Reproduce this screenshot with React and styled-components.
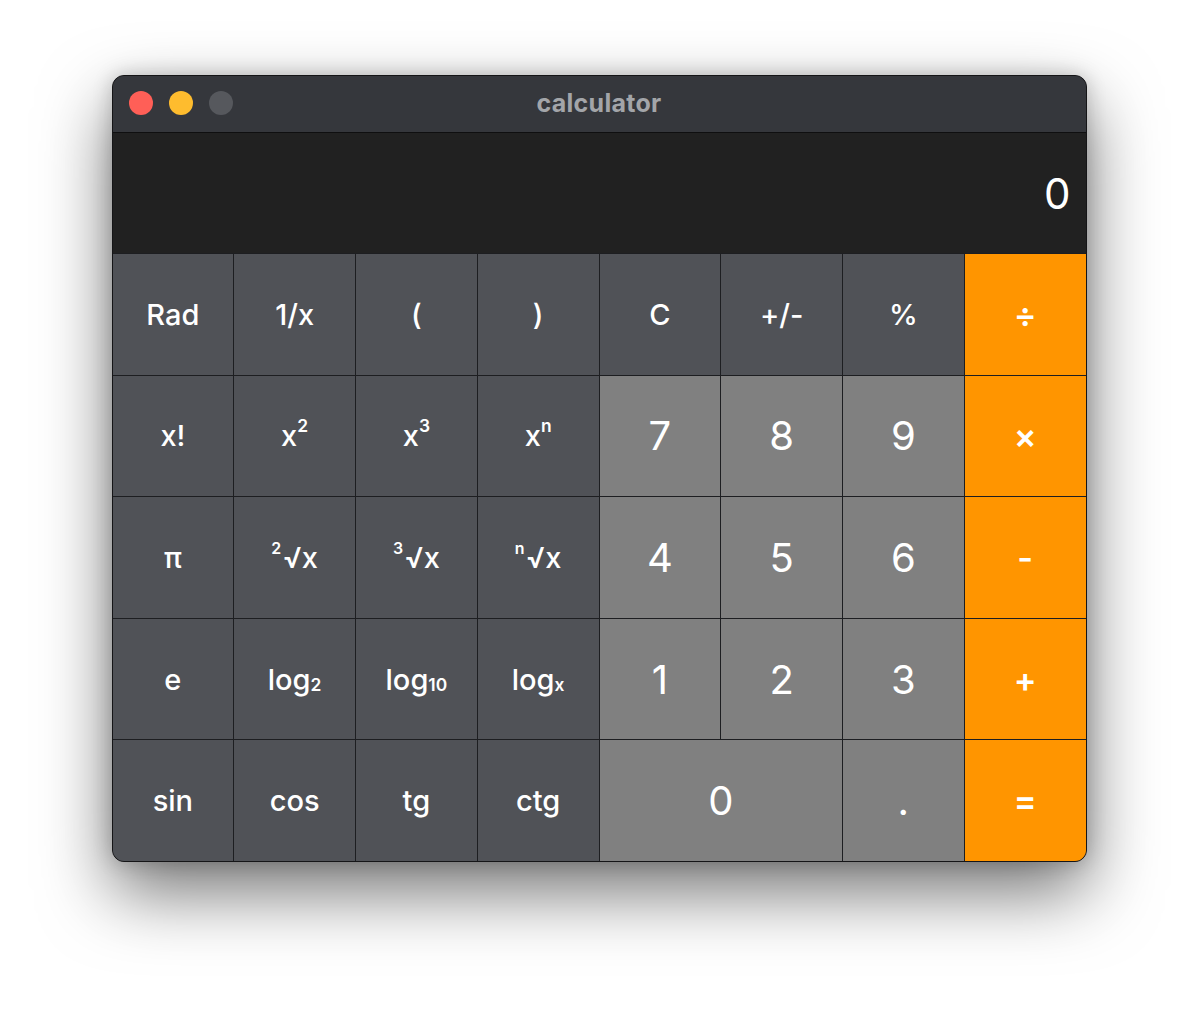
import React from "react";
import styled, { createGlobalStyle } from "styled-components";

const GlobalStyle = createGlobalStyle`
  html, body {
    margin: 0;
    padding: 0;
    background: #ffffff;
  }
  body {
    font-family: Inter, "Liberation Sans", sans-serif;
  }
`;

const Page = styled.div`
  display: flex;
  justify-content: center;
  padding-top: 75px;
  height: 1010px;
  box-sizing: border-box;
`;

const Window = styled.div`
  width: 975px;
  height: 787px;
  box-sizing: border-box;
  border: 1px solid #151517;
  border-radius: 12px;
  overflow: hidden;
  display: flex;
  flex-direction: column;
  background: #1d1e21;
  box-shadow: 0 30px 70px rgba(0, 0, 0, 0.55), 0 0 20px rgba(0, 0, 0, 0.2);
`;

const TitleBar = styled.div`
  position: relative;
  height: 56px;
  flex: none;
  display: flex;
  align-items: center;
  justify-content: center;
  background: #35373c;
  border-bottom: 1px solid #0f0f10;
`;

const Lights = styled.div`
  position: absolute;
  left: 16px;
  top: 15px;
  display: flex;
  gap: 16px;
`;

const Light = styled.span`
  width: 24px;
  height: 24px;
  border-radius: 50%;
  background: ${p => p.color};
`;

const Title = styled.div`
  color: #a3a5a9;
  font-size: 25px;
  font-weight: 700;
  letter-spacing: 0.3px;
  margin-top: -2px;
`;

const Display = styled.div`
  height: 120px;
  flex: none;
  background: #212121;
  display: flex;
  align-items: center;
  justify-content: flex-end;
  padding: 0 15px 0 0;
  color: #ffffff;
  font-size: 42px;
  font-weight: 400;
`;

const Pad = styled.div`
  flex: 1;
  display: grid;
  grid-template-columns: repeat(8, 1fr);
  grid-template-rows: repeat(5, 1fr);
  gap: 1px;
  margin-top: 1px;
  background: #1d1e21;
`;

const colors = {
  fn: "#505257",
  num: "#808080",
  op: "#ff9500",
};

const sizes = {
  fn: "29px",
  num: "40px",
  op: "34px",
};

const weights = {
  fn: 500,
  num: 400,
  op: 600,
};

const Key = styled.button`
  border: none;
  margin: 0;
  padding: 0;
  display: flex;
  align-items: center;
  justify-content: center;
  grid-column: span ${p => p.span || 1};
  background: ${p => colors[p.kind]};
  color: #ffffff;
  font-family: Inter, "Liberation Sans", sans-serif;
  font-size: ${p => sizes[p.kind]};
  font-weight: ${p => weights[p.kind]};
  cursor: pointer;
`;

const Sup = styled.span`
  font-size: 0.6em;
  font-weight: 600;
  position: relative;
  top: -0.6em;
`;

const PreSup = styled.span`
  font-size: 0.55em;
  font-weight: 600;
  position: relative;
  top: -0.55em;
  margin-right: 2px;
`;

const Sub = styled.span`
  font-size: 0.6em;
  font-weight: 600;
  position: relative;
  top: 0.3em;
`;

const rows = [
  [
    ["fn", "Rad"], ["fn", "1/x"], ["fn", "("], ["fn", ")"],
    ["fn", "C"], ["fn", "+/-"], ["fn", "%"], ["op", "÷"],
  ],
  [
    ["fn", <>x!</>],
    ["fn", <>x<Sup>2</Sup></>],
    ["fn", <>x<Sup>3</Sup></>],
    ["fn", <>x<Sup>n</Sup></>],
    ["num", "7"], ["num", "8"], ["num", "9"], ["op", "×"],
  ],
  [
    ["fn", "π"],
    ["fn", <><PreSup>2</PreSup>√x</>],
    ["fn", <><PreSup>3</PreSup>√x</>],
    ["fn", <><PreSup>n</PreSup>√x</>],
    ["num", "4"], ["num", "5"], ["num", "6"], ["op", "-"],
  ],
  [
    ["fn", "e"],
    ["fn", <>log<Sub>2</Sub></>],
    ["fn", <>log<Sub>10</Sub></>],
    ["fn", <>log<Sub>x</Sub></>],
    ["num", "1"], ["num", "2"], ["num", "3"], ["op", "+"],
  ],
  [
    ["fn", "sin"], ["fn", "cos"], ["fn", "tg"], ["fn", "ctg"],
    ["num", "0", 2], ["num", "."], ["op", "="],
  ],
];

export default function App() {
  return (
    <Page>
      <GlobalStyle />
      <Window>
        <TitleBar>
          <Lights>
            <Light color="#ff5f57" />
            <Light color="#febc2e" />
            <Light color="#56585d" />
          </Lights>
          <Title>calculator</Title>
        </TitleBar>
        <Display>0</Display>
        <Pad>
          {rows.flat().map(([kind, label, span], i) => (
            <Key key={i} kind={kind} span={span}>
              {label}
            </Key>
          ))}
        </Pad>
      </Window>
    </Page>
  );
}
